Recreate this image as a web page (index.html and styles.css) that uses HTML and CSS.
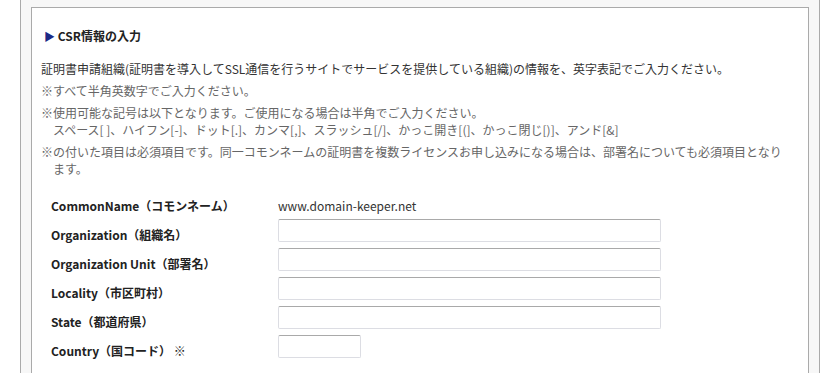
FILE: index.html
```html
<!DOCTYPE html>
<html lang="ja">
<head>
    <meta charset="UTF-8">
    <meta name="viewport" content="width=device-width, initial-scale=1.0">
    <title>CSR情報の入力</title>
    <link rel="stylesheet" href="styles.css">
</head>
<body>
    <!-- Outer frame -->
    <div class="frame">
        <div class="panel">
            <h2 class="section-title"><span class="arrow">&#9654;</span> CSR情報の入力</h2>

            <!-- Notes -->
            <p class="lead">証明書申請組織(証明書を導入してSSL通信を行うサイトでサービスを提供している組織)の情報を、英字表記でご入力ください。</p>
            <p class="note">※すべて半角英数字でご入力ください。</p>
            <p class="note">※使用可能な記号は以下となります。ご使用になる場合は半角でご入力ください。<br>スペース[ ]、ハイフン[-]、ドット[.]、カンマ[,]、スラッシュ[/]、かっこ開き[(]、かっこ閉じ[)]、アンド[&amp;]</p>
            <p class="note">※の付いた項目は必須項目です。同一コモンネームの証明書を複数ライセンスお申し込みになる場合は、部署名についても必須項目となります。</p>

            <!-- CSR form -->
            <div class="csr-form">
                <div class="row">
                    <div class="label">CommonName（コモンネーム）</div>
                    <div class="value">www.domain-keeper.net</div>
                </div>
                <div class="row">
                    <div class="label">Organization（組織名）</div>
                    <input type="text" class="field">
                </div>
                <div class="row">
                    <div class="label">Organization Unit（部署名）</div>
                    <input type="text" class="field">
                </div>
                <div class="row">
                    <div class="label">Locality（市区町村）</div>
                    <input type="text" class="field">
                </div>
                <div class="row">
                    <div class="label">State（都道府県）</div>
                    <input type="text" class="field">
                </div>
                <div class="row">
                    <div class="label">Country（国コード） ※</div>
                    <input type="text" class="field short">
                </div>
            </div>
        </div>
    </div>
</body>
</html>
```

FILE: styles.css
```css
/* General */
html, body {
    overflow: hidden;
}

body {
    margin: 0;
    padding: 0;
    font-family: "Noto Sans CJK JP", "Noto Sans", sans-serif;
    font-size: 12px;
    line-height: 17px;
    color: #333;
    background-color: #fff;
}

/* Frame */
.frame {
    margin: 0 20px;
    padding: 7px 10px 0;
    background-color: #f7f7f7;
    border-left: 1px solid #aaa;
    border-right: 1px solid #aaa;
    min-height: 380px;
}

.panel {
    background-color: #fff;
    border: 1px solid #aaa;
    padding: 19px 20px 20px 9px;
    min-height: 360px;
}

/* Heading */
.section-title {
    margin: 0 0 15px 3px;
    font-size: 12px;
    font-weight: bold;
    color: #222;
}

.section-title .arrow {
    color: #1c2a85;
    font-size: 11px;
}

/* Notes */
.lead,
.note {
    margin: 0 0 5px;
}

.lead {
    color: #333;
}

.note {
    color: #666;
    padding-left: 12px;
    text-indent: -12px;
}

/* Form */
.csr-form {
    margin-top: 10px;
    padding-left: 10px;
}

.row {
    display: flex;
    align-items: center;
    height: 29px;
}

.label {
    width: 227px;
    padding-top: 8px;
    font-weight: bold;
    color: #222;
}

.value {
    padding-top: 8px;
    color: #333;
}

.field {
    box-sizing: border-box;
    width: 383px;
    height: 23px;
    margin: 0;
    padding: 2px 4px;
    border: 1px solid #dcdde3;
    border-top-color: #a9a9a9;
    border-radius: 2px;
    font-family: inherit;
    font-size: 12px;
}

.field.short {
    width: 83px;
}
```
